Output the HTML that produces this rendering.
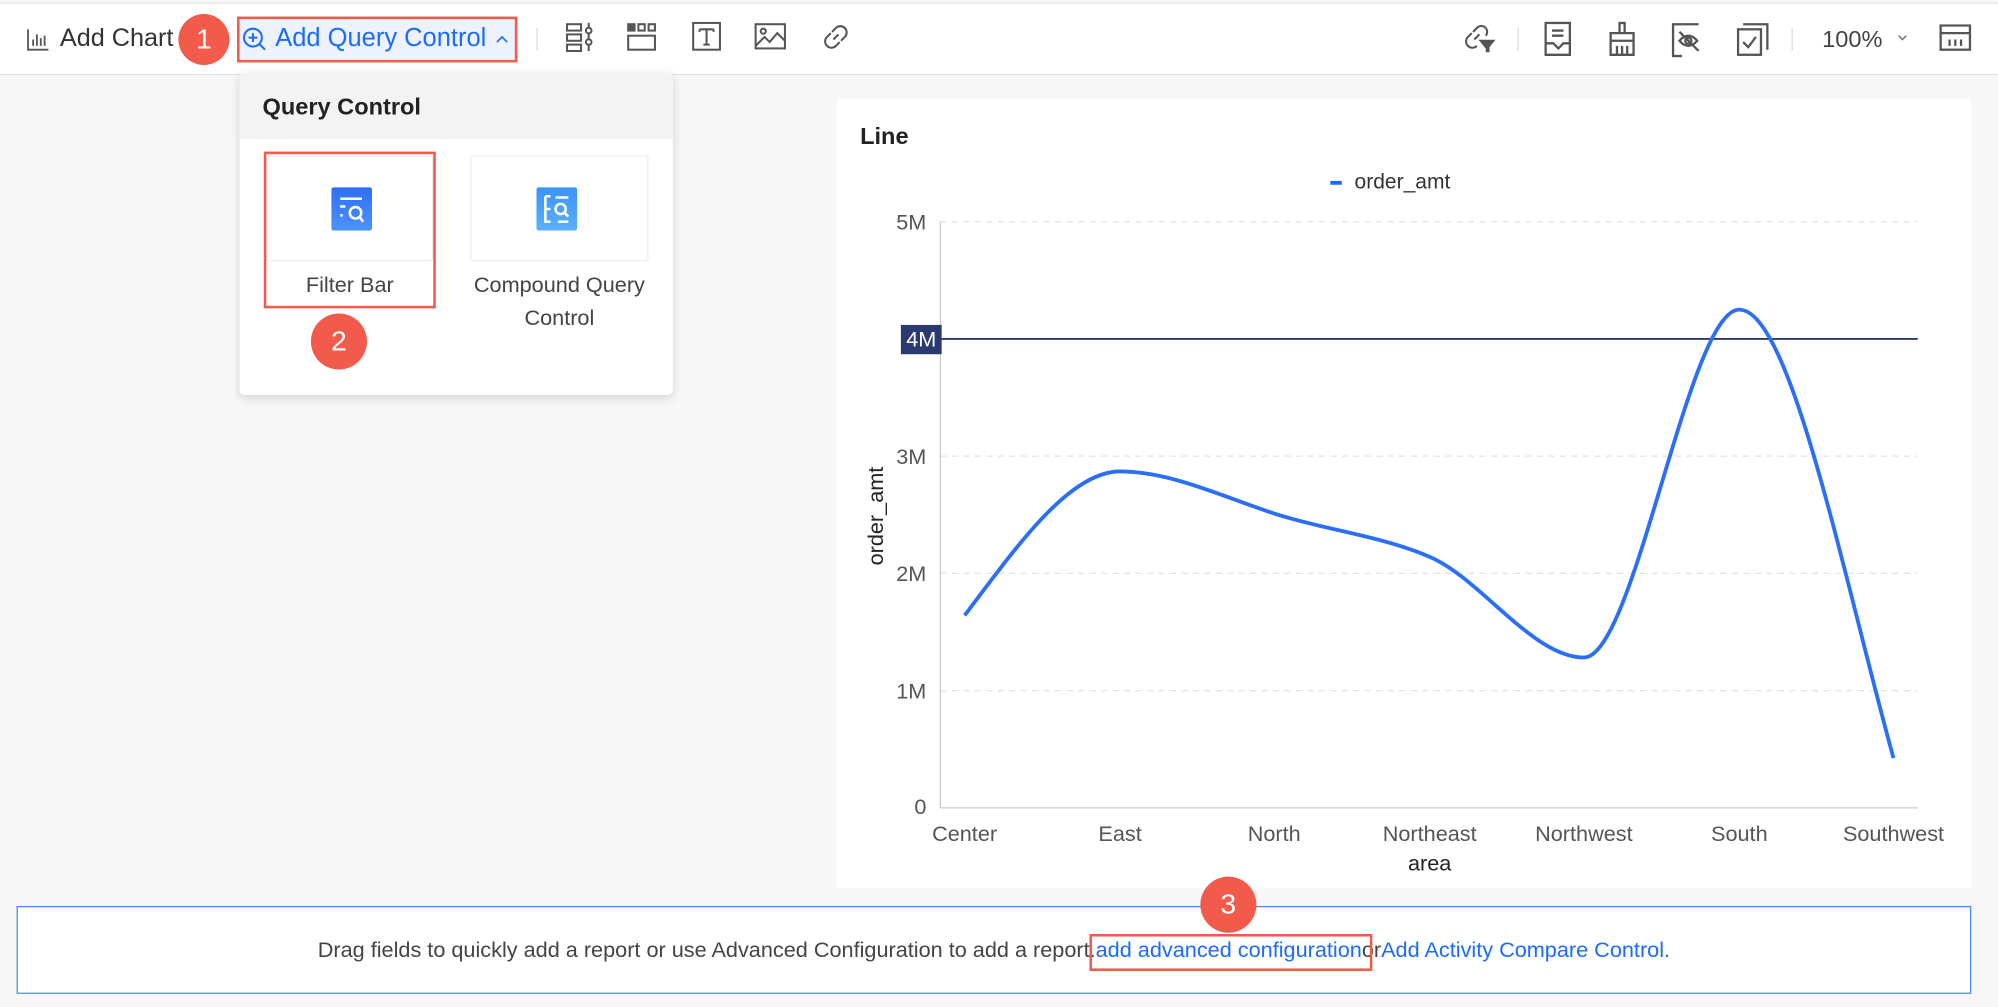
<!DOCTYPE html>
<html><head><meta charset="utf-8">
<style>
*{margin:0;padding:0;box-sizing:border-box}
html,body{width:1998px;height:1006px;overflow:hidden;background:#f7f7f7;font-family:"Liberation Sans",sans-serif}
#s{position:absolute;left:0;top:0;width:1568px;height:790px;transform:scale(1.27423);transform-origin:0 0;background:#f7f7f7}
.a{position:absolute}
.tb{left:0;top:2px;width:1568px;height:57px;background:#fff;border-top:1px solid #e3e3e3;border-bottom:1px solid #e3e3e3}
.badge{position:absolute;border-radius:50%;background:#f25a4c;color:#fff;font-size:22px;text-align:center;font-weight:500}
.sep{position:absolute;width:1px;height:18px;background:#ddd;top:22px}
.ic{position:absolute;top:17px}
</style></head><body><div id="s">
<div class="a tb"></div>
<svg class="a" style="left:21px;top:22px" width="18" height="18" viewBox="0 0 18 18" fill="none" stroke="#555" stroke-width="1.4"><path d="M1 1V17H17"/><path d="M5 14V9M8 14V5M11 14V8M14 14V6"/></svg>
<div class="a" style="left:47px;top:19px;font-size:19.8px;color:#333">Add Chart</div>
<div class="badge" style="left:140px;top:11px;width:40px;height:40px;line-height:40px">1</div>
<div class="a" style="left:186px;top:13px;width:220px;height:36px;background:#eef2fe;border:2px solid #f25a4c"></div>
<svg class="a" style="left:190px;top:21px" width="20" height="20" viewBox="0 0 20 20" fill="none" stroke="#1a6cff" stroke-width="1.6"><circle cx="8.5" cy="8.5" r="7"/><path d="M13.5 13.5L18 18M8.5 5V12M5 8.5H12"/></svg>
<div class="a" style="left:216px;top:19px;font-size:20px;color:#1a6cff">Add Query Control</div>
<svg class="a" style="left:389px;top:27px" width="10" height="8" viewBox="0 0 10 8" fill="none" stroke="#1a6cff" stroke-width="1.3"><path d="M1 6L5 2L9 6"/></svg>
<div class="sep" style="left:421px"></div>
<svg class="ic" style="left:444px" width="24" height="24" viewBox="0 0 24 24" fill="none" stroke="#555" stroke-width="1.6"><rect x="1" y="2" width="11" height="5"/><rect x="1" y="10" width="11" height="5"/><rect x="1" y="18" width="11" height="5"/><path d="M18 1V23"/><circle cx="18" cy="7" r="2.2" fill="#fff"/><circle cx="18" cy="16" r="2.2" fill="#fff"/></svg>
<svg class="ic" style="left:492px" width="24" height="24" viewBox="0 0 24 24" fill="none" stroke="#555" stroke-width="1.6"><rect x="1" y="2" width="5" height="5" fill="#555"/><rect x="9" y="2" width="5" height="5"/><rect x="17" y="2" width="5" height="5"/><rect x="1" y="11" width="21" height="11"/></svg>
<svg class="ic" style="left:543px" width="24" height="24" viewBox="0 0 24 24" fill="none" stroke="#555" stroke-width="1.6"><rect x="1" y="1" width="21" height="21"/><path d="M6 6H17M11.5 6V18M9 18H14M6 6V8M17 6V8"/></svg>
<svg class="ic" style="left:592px" width="26" height="24" viewBox="0 0 26 24" fill="none" stroke="#555" stroke-width="1.6"><rect x="1" y="2" width="23" height="19"/><circle cx="7" cy="7.5" r="2"/><path d="M1 19L8 12L12 16L18 9L24 15"/></svg>
<svg class="ic" style="left:644px" width="24" height="24" viewBox="0 0 24 24" fill="none" stroke="#555" stroke-width="1.6"><path d="M10 14L14 10M9 8L12 5A4 4 0 0 1 19 12L16 15M8 9L5 12A4 4 0 0 0 12 19L15 16"/></svg>
<svg class="ic" style="left:1148px" width="26" height="26" viewBox="0 0 26 26" fill="none" stroke="#555" stroke-width="1.6"><path d="M9 14L13 10M8 8L11 5A4 4 0 0 1 18 11M7 9L4 12A4 4 0 0 0 11 19"/><path d="M14 15H24L20 20H18Z" fill="#555"/><rect x="18" y="20" width="3" height="4" fill="#555" stroke="none"/></svg>
<div class="sep" style="left:1191px"></div>
<svg class="ic" style="left:1212px" width="22" height="28" viewBox="0 0 22 28" fill="none" stroke="#555" stroke-width="1.8"><path d="M1 1H20V26H1Z"/><path d="M6 7H15M6 11H15M1 17H7L11 21L15 17H20"/></svg>
<svg class="ic" style="left:1261px" width="24" height="28" viewBox="0 0 24 28" fill="none" stroke="#555" stroke-width="1.8"><path d="M10 1H14V9H10ZM3 9H21V15H3ZM3 15V26H21V15M8 19V26M12 19V26M16 19V26"/></svg>
<svg class="ic" style="left:1311px" width="26" height="28" viewBox="0 0 26 28" fill="none" stroke="#555" stroke-width="1.8"><path d="M22 2H2V27H9"/><path d="M7 15Q14 7 21 15Q14 23 7 15Z"/><circle cx="14" cy="15" r="2.4"/><path d="M7 8L22 23"/></svg>
<svg class="ic" style="left:1363px" width="26" height="28" viewBox="0 0 26 28" fill="none" stroke="#555" stroke-width="1.8"><rect x="1" y="6" width="18" height="20"/><path d="M5 2H24V22M5 16L9 20L15 12"/></svg>
<div class="sep" style="left:1406px"></div>
<div class="a" style="left:1430px;top:20px;font-size:18.5px;color:#444">100%</div>
<svg class="a" style="left:1489px;top:27px" width="8" height="6" viewBox="0 0 8 6" fill="none" stroke="#777" stroke-width="1.2"><path d="M1 1L4 4L7 1"/></svg>
<svg class="ic" style="left:1522px;top:19px" width="26" height="22" viewBox="0 0 26 22" fill="none" stroke="#555" stroke-width="1.8"><rect x="1" y="1" width="23" height="19"/><path d="M1 7H24M8 12V17M12.5 12V17M17 12V17"/></svg>

<div class="a" style="left:188px;top:57px;width:340px;height:253px;background:#fff;border-radius:4px;box-shadow:0 2px 8px rgba(0,0,0,.15);overflow:hidden">
 <div style="height:52px;background:#f3f3f3;padding:16px 0 0 18px;font-size:18.5px;font-weight:bold;color:#222">Query Control</div>
</div>
<div class="a" style="left:209px;top:122px;width:131px;height:83px;border:1px solid #eee;border-radius:2px"></div>
<div class="a" style="left:369px;top:122px;width:140px;height:83px;border:1px solid #eee;border-radius:2px"></div>
<svg class="a" style="left:260px;top:147px" width="32" height="34" viewBox="0 0 32 34"><defs><linearGradient id="g1" x1="0" y1="0" x2="0" y2="1"><stop offset="0" stop-color="#2f6ef5"/><stop offset="1" stop-color="#4d92fb"/></linearGradient></defs><rect width="32" height="34" rx="2" fill="url(#g1)"/><g stroke="#fff" stroke-width="2" fill="none"><path d="M7 9H24M7 15H11M7 22H9"/><circle cx="19" cy="20" r="4.5"/><path d="M22 23L25 27"/></g></svg>
<svg class="a" style="left:421px;top:147px" width="32" height="34" viewBox="0 0 32 34"><defs><linearGradient id="g2" x1="0" y1="0" x2="0" y2="1"><stop offset="0" stop-color="#3a94f7"/><stop offset="1" stop-color="#5cb0fb"/></linearGradient></defs><rect width="32" height="34" rx="2" fill="url(#g2)"/><g stroke="#fff" stroke-width="2" fill="none"><path d="M7 7V28M7 7H11M7 17H11M7 27H11M15 8H25M17 27H25"/><circle cx="19" cy="17" r="4"/><path d="M22 20L25 23"/></g></svg>
<div class="a" style="left:209px;top:214px;width:131px;text-align:center;font-size:17px;color:#444">Filter Bar</div>
<div class="a" style="left:355px;top:211px;width:168px;text-align:center;font-size:17px;color:#444;line-height:26px">Compound Query<br>Control</div>
<div class="a" style="left:207px;top:119px;width:135px;height:123px;border:2px solid #f25a4c"></div>
<div class="badge" style="left:244px;top:246px;width:44px;height:44px;line-height:44px">2</div>

<div class="a" style="left:657px;top:78px;width:890px;height:619px;background:#fff"></div>
<div class="a" style="left:675px;top:96px;font-size:18.5px;font-weight:bold;color:#222">Line</div>
<div class="a" style="left:1044px;top:142px;width:9px;height:3px;background:#1a6cff"></div>
<div class="a" style="left:1063px;top:134px;font-size:16.5px;color:#333">order_amt</div>
<svg class="a" style="left:0;top:0" width="1568" height="790">
<g stroke="#e3e3e3" stroke-dasharray="5,4" stroke-width="1"><path d="M738 174H1505M738 358H1505M738 450H1505M738 542H1505"/></g>
<path d="M738 174V634M738 634H1505" stroke="#ccc" stroke-width="1"/>
<path d="M738 266H1505" stroke="#2b3a6e" stroke-width="1.5"/>
<path d="M757 483C797 430 839 370 879 370C919 370 960 390 1000 403C1040 416 1082 420 1122 437C1162 454 1203 516 1243 516C1283 516 1325 243 1365 243C1405 243 1446 450 1486 595" fill="none" stroke="#2c6ff7" stroke-width="3"/>
<g font-family="Liberation Sans" font-size="17" fill="#555" text-anchor="end"><text x="727" y="180">5M</text><text x="727" y="364">3M</text><text x="727" y="456">2M</text><text x="727" y="548">1M</text><text x="727" y="639">0</text></g>
<rect x="707" y="255" width="32" height="23" fill="#2b3a6e"/>
<text x="723" y="272" font-family="Liberation Sans" font-size="17" fill="#fff" text-anchor="middle">4M</text>
<g font-family="Liberation Sans" font-size="17" fill="#555" text-anchor="middle"><text x="757" y="660">Center</text><text x="879" y="660">East</text><text x="1000" y="660">North</text><text x="1122" y="660">Northeast</text><text x="1243" y="660">Northwest</text><text x="1365" y="660">South</text><text x="1486" y="660">Southwest</text><text x="1122" y="683" fill="#222">area</text></g>
<text transform="translate(693 405) rotate(-90)" font-family="Liberation Sans" font-size="17" fill="#222" text-anchor="middle">order_amt</text>
</svg>

<div class="a" style="left:13px;top:711px;width:1534px;height:69px;background:#fff;border:1px solid #4a8af4"></div>
<div class="a" style="left:13px;top:736px;width:1534px;text-align:center;font-size:17px;color:#444;white-space:nowrap">Drag fields to quickly add a report or use Advanced Configuration to add a report.<span style="color:#1a6cff">add advanced configuration</span>or<span style="color:#1a6cff">Add Activity Compare Control.</span></div>
<div class="a" style="left:855px;top:733px;width:222px;height:29px;border:2px solid #f25a4c"></div>
<div class="badge" style="left:942px;top:688px;width:44px;height:44px;line-height:44px">3</div>
</div></body></html>
